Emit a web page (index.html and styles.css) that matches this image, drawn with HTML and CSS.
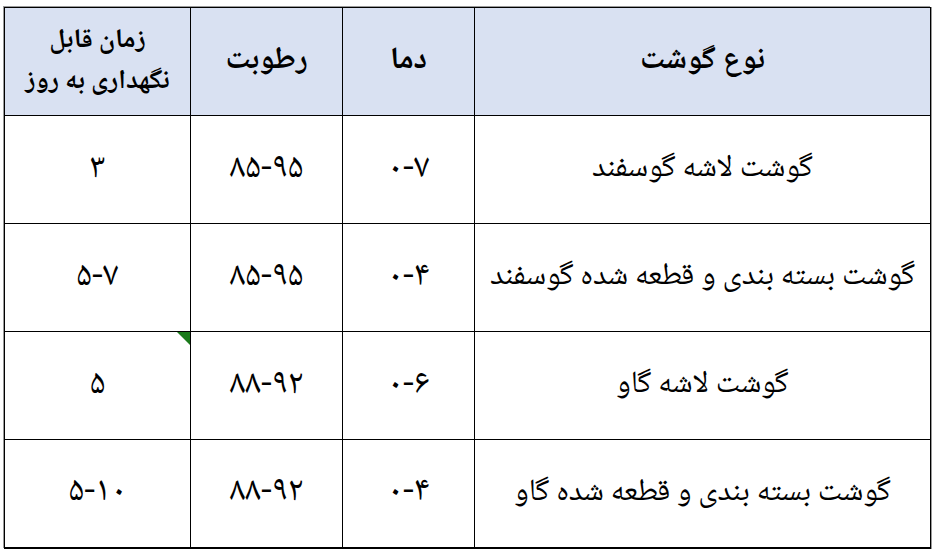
FILE: index.html
```html
<!DOCTYPE html>
<html lang="fa" dir="rtl">
<head>
<meta charset="utf-8">
<title>جدول نگهداری گوشت</title>
<link rel="stylesheet" href="styles.css">
</head>
<body>
<table class="meat-table">
  <colgroup>
    <col class="c-type">
    <col class="c-temp">
    <col class="c-hum">
    <col class="c-days">
  </colgroup>
  <thead>
    <tr>
      <th>نوع گوشت</th>
      <th>دما</th>
      <th>رطوبت</th>
      <th class="th-days">زمان قابل<br>نگهداری به روز</th>
    </tr>
  </thead>
  <tbody>
    <tr>
      <td>گوشت لاشه گوسفند</td>
      <td class="num">۰-۷</td>
      <td class="num">۸۵-۹۵</td>
      <td class="num">۳</td>
    </tr>
    <tr>
      <td>گوشت بسته بندی و قطعه شده گوسفند</td>
      <td class="num">۰-۴</td>
      <td class="num">۸۵-۹۵</td>
      <td class="num">۵-۷</td>
    </tr>
    <tr>
      <td>گوشت لاشه گاو</td>
      <td class="num">۰-۶</td>
      <td class="num">۸۸-۹۲</td>
      <td class="num flagged">۵</td>
    </tr>
    <tr>
      <td>گوشت بسته بندی و قطعه شده گاو</td>
      <td class="num">۰-۴</td>
      <td class="num">۸۸-۹۲</td>
      <td class="num">۵-۱۰</td>
    </tr>
  </tbody>
</table>
</body>
</html>
```
FILE: styles.css
```css
html, body {
  margin: 0;
  padding: 0;
  background: #ffffff;
}

body {
  padding: 7px 6px 0 5px;
  font-family: "Noto Naskh Arabic", "DejaVu Sans", serif;
  color: #000000;
}

.meat-table {
  width: 926px;
  border-collapse: collapse;
  table-layout: fixed;
  border: 1px solid #000000;
  border-bottom-width: 2px;
  box-shadow: -1px -1px 0 #9a9a9a, 1px 0 0 #9a9a9a;
}

.c-type { width: 456px; }
.c-temp { width: 132px; }
.c-hum  { width: 152px; }
.c-days { width: 186px; }

.meat-table th,
.meat-table td {
  border: 1px solid #000000;
  text-align: center;
  vertical-align: middle;
  padding: 0 4px;
  height: 108px;
  box-sizing: border-box;
}

.meat-table th {
  background: #d9e1f2;
  font-weight: bold;
  font-size: 31px;
  line-height: 1.2;
}

.meat-table .th-days {
  font-size: 27px;
  line-height: 41px;
}

.meat-table td {
  font-size: 31px;
  font-weight: normal;
  line-height: 1.2;
}

.meat-table td.num {
  font-size: 35px;
}

.meat-table td.flagged {
  position: relative;
}

.meat-table td.flagged::after {
  content: "";
  position: absolute;
  top: 0;
  right: 0;
  width: 0;
  height: 0;
  border-top: 13px solid #1a7a1a;
  border-left: 13px solid transparent;
}
```
